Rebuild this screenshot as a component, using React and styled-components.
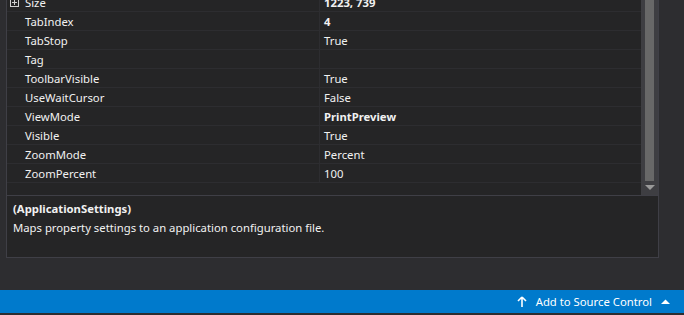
import React from 'react'
import styled, { createGlobalStyle } from 'styled-components'

const GlobalStyle = createGlobalStyle`
    html, body {
        margin: 0;
        padding: 0;
        background: #2d2d30;
        font-family: "Segoe UI", "Noto Sans", "Liberation Sans", sans-serif;
    }
`

const Page = styled.div`
    width: 684px;
    height: 315px;
    display: flex;
    flex-direction: column;
    background: #2d2d30;
    overflow: hidden;
`

const Panel = styled.div`
    margin-left: 6px;
    width: 653px;
    height: 258px;
    box-sizing: border-box;
    border-left: 1px solid #3f3f46;
    border-right: 1px solid #3f3f46;
    border-bottom: 1px solid #3f3f46;
    display: flex;
    flex-direction: column;
    background: #252526;
`

const GridArea = styled.div`
    height: 195px;
    display: flex;
    border-bottom: 1px solid #3f3f46;
    overflow: hidden;
`

const Rows = styled.div`
    flex: 1;
    display: flex;
    flex-direction: column;
    margin-top: -7px;
`

const Row = styled.div`
    display: flex;
    height: 19px;
    flex-shrink: 0;
    box-sizing: border-box;
    border-bottom: 1px solid #2d2d30;
    font-size: 11.3px;
    color: #f1f1f1;
`

const Gutter = styled.div`
    width: 14px;
    display: flex;
    align-items: center;
    justify-content: center;
    background: #252526;
`

const Name = styled.div`
    width: 294px;
    padding-left: 4px;
    display: flex;
    align-items: center;
    background: #252526;
    border-right: 1px solid #2d2d30;
`

const Value = styled.div`
    flex: 1;
    padding-left: 4px;
    display: flex;
    align-items: center;
    font-weight: ${p => (p.$bold ? 700 : 400)};
`

const Expander = styled.div`
    width: 7px;
    height: 7px;
    border: 1px solid #d0d0d0;
    position: relative;
    &::before, &::after {
        content: "";
        position: absolute;
        background: #d0d0d0;
    }
    &::before { left: 1px; right: 1px; top: 3px; height: 1px; }
    &::after { top: 1px; bottom: 1px; left: 3px; width: 1px; }
`

const ScrollBar = styled.div`
    width: 17px;
    background: #3e3e42;
    display: flex;
    flex-direction: column;
    align-items: center;
`

const Thumb = styled.div`
    width: 9px;
    flex: 1;
    background: #686868;
    margin-bottom: 4px;
`

const Arrow = styled.div`
    width: 0;
    height: 0;
    border-left: 5px solid transparent;
    border-right: 5px solid transparent;
    border-top: 5px solid #999999;
    margin-bottom: 5px;
`

const Description = styled.div`
    flex: 1;
    padding: 3px 6px;
    color: #f1f1f1;
    font-size: 11.3px;
    line-height: 19px;
`

const DescTitle = styled.div`
    font-weight: 700;
`

const StatusBar = styled.div`
    margin-top: 32px;
    height: 23px;
    background: #007acc;
    display: flex;
    align-items: center;
    justify-content: flex-end;
    padding-right: 14px;
    color: #ffffff;
    font-size: 11.3px;
    gap: 9px;
`

const props = [
    ['Size', '1223, 739', true, true],
    ['TabIndex', '4', true],
    ['TabStop', 'True'],
    ['Tag', ''],
    ['ToolbarVisible', 'True'],
    ['UseWaitCursor', 'False'],
    ['ViewMode', 'PrintPreview', true],
    ['Visible', 'True'],
    ['ZoomMode', 'Percent'],
    ['ZoomPercent', '100'],
]

export default function App() {
    return (
        <Page>
            <GlobalStyle />
            <Panel>
                <GridArea>
                    <Rows>
                        {props.map(([name, value, bold, expand]) => (
                            <Row key={name}>
                                <Gutter>{expand && <Expander />}</Gutter>
                                <Name>{name}</Name>
                                <Value $bold={bold}>{value}</Value>
                            </Row>
                        ))}
                    </Rows>
                    <ScrollBar>
                        <Thumb />
                        <Arrow />
                    </ScrollBar>
                </GridArea>
                <Description>
                    <DescTitle>(ApplicationSettings)</DescTitle>
                    <div>Maps property settings to an application configuration file.</div>
                </Description>
            </Panel>
            <StatusBar>
                <svg width="10" height="12" viewBox="0 0 10 12">
                    <path d="M5 1 L1 5 M5 1 L9 5 M5 1 L5 11" stroke="#fff" strokeWidth="1.6" fill="none" />
                </svg>
                <span>Add to Source Control</span>
                <svg width="9" height="6" viewBox="0 0 9 6" style={{ marginLeft: 0 }}>
                    <path d="M0 5 L4.5 0.5 L9 5 Z" fill="#fff" />
                </svg>
            </StatusBar>
        </Page>
    )
}
